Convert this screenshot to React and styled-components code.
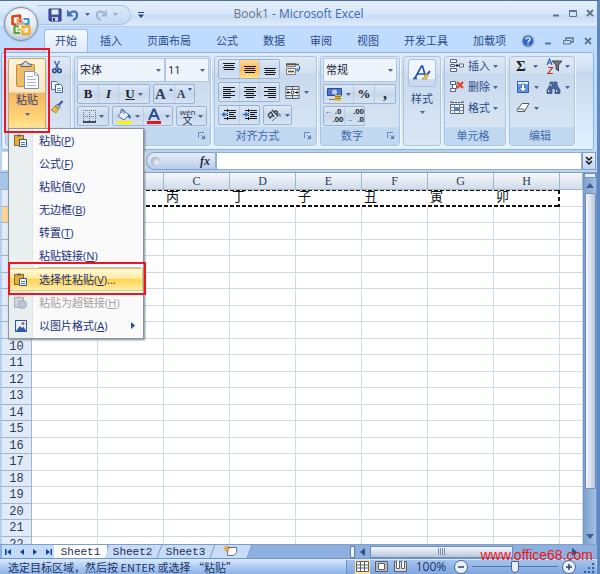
import React from "react";
import styled, { createGlobalStyle, css } from "styled-components";

const ui = `"Open Sans", "Noto Sans CJK SC", sans-serif`;
const sheetFont = `"Liberation Mono", "Noto Sans CJK SC", monospace`;
const navy = "#2b4b87";

const Global = createGlobalStyle`
  * { box-sizing: border-box; }
  body { margin: 0; font-family: ${ui}; font-size: 11px; line-height: 14px; color: ${navy}; }
  button, select, input { font: inherit; color: inherit; margin: 0; padding: 0; border: 0; background: none; border-radius: 0; }
  svg { display: block; flex: none; }
`;

const Window = styled.div`
  position: relative;
  height: 100vh;
  display: flex;
  flex-direction: column;
  overflow: hidden;
  background: #bfdbff;
  border-top: 1px solid #4f6f9d;
  border-right: 3px solid #5f88c2;
`;

/* ---------- title bar ---------- */
const TitleBar = styled.header`
  display: grid;
  grid-template-columns: 1fr auto 1fr;
  align-items: center;
  height: 26px;
  border-bottom: 1px solid #b4cdf0;
  background: linear-gradient(#e6f0fc, #d6e6f9 50%, #c9ddf6 60%, #deebfb);
`;
const Title = styled.h1`
  margin: 0;
  font: 12px/16px ${ui};
  color: #3d6aaa;
  span { color: #6b7482; }
`;
const QuickAccess = styled.div`
  display: flex;
  align-items: center;
  padding: 2px 0 0 37px;
`;
const QuickPill = styled.div`
  display: flex;
  align-items: center;
  gap: 4px;
  height: 20px;
  padding: 0 12px 0 11px;
  border: 1px solid #a8c3e6;
  border-left: 0;
  border-radius: 0 10px 10px 0;
  background: linear-gradient(#dbe9fa, #c6daf3);
  margin-right: 7px;
`;
const IconButton = styled.button`
  display: inline-flex;
  align-items: center;
  justify-content: center;
  gap: ${p => p.$gap || 0}px;
  width: ${p => (p.$w ? p.$w + "px" : "auto")};
  height: ${p => (p.$h ? p.$h + "px" : "auto")};
`;
const WindowControls = styled.div`
  display: flex;
  align-items: center;
  justify-content: flex-end;
  gap: 3px;
  padding-bottom: 2px;
`;
const OfficeButton = styled.button`
  position: absolute;
  left: 4px;
  top: 6px;
  z-index: 3;
  width: 34px;
  height: 34px;
  display: grid;
  place-items: center;
  border: 1px solid #7d8fa9;
  border-radius: 50%;
  background: radial-gradient(circle at 50% 30%, #ffffff, #e9edf3 50%, #bccadd 78%, #e9f1fb);
  box-shadow: 0 0 2px #7d93b2;
`;

/* ---------- tabs ---------- */
const TabBar = styled.nav`
  display: flex;
  align-items: stretch;
  gap: 1px;
  height: 25px;
  padding: 2px 2px 0 42px;
`;
const Tab = styled.button`
  padding: 0 12px;
  white-space: nowrap;
  color: #2b4b87;
  ${p => p.$active && css`
    margin: 0 -1px 0 2px;
    padding: 0 10px;
    border: 1px solid #9dbbe3;
    border-bottom: 0;
    border-radius: 3px 3px 0 0;
    background: linear-gradient(#f4f9fe, #dfeaf8);
  `}
`;
const TabTools = styled.div`
  display: flex;
  align-items: center;
  justify-content: flex-end;
  flex: 1;
  gap: 6px;
`;

/* ---------- ribbon ---------- */
const Ribbon = styled.section`
  position: relative;
  z-index: 2;
  display: flex;
  gap: 3px;
  height: 98px;
  margin: 0 3px 0 1px;
  padding: 3px 4px 3px 3px;
  border: 1px solid #8db2e3;
  border-radius: 3px;
  background: linear-gradient(#dfebf9, #d0dff1 18%, #c7d8ed 20%, #d9e9f9 70%, #e0f2fd);
`;
const Group = styled.div`
  position: relative;
  flex: 0 0 ${p => p.$w}px;
  display: flex;
  flex-direction: column;
  border: 1px solid #a9c4e4;
  border-radius: 3px;
  background: linear-gradient(#dfe9f5, #d2dff0 18%, #c9d9ed 20%, #dbe7f4);
  box-shadow: 1px 1px 0 #f2f8fe;
`;
const GroupBody = styled.div`
  flex: 1;
  display: flex;
  flex-direction: column;
  gap: ${p => p.$gap || 3}px;
  padding: ${p => p.$pad || "3px"};
`;
const GroupLabel = styled.div`
  display: flex;
  align-items: center;
  height: 18px;
  padding-right: 4px;
  background: #c1d8f1;
  color: #4468a8;
  span { flex: 1; text-align: center; padding-right: ${p => (p.$launcher ? 4 : 0)}px; }
`;
const Line = styled.div`
  display: flex;
  align-items: center;
  gap: ${p => (p.$gap === undefined ? 3 : p.$gap)}px;
`;
const Cluster = styled.div`
  display: flex;
  height: 20px;
  border: 1px solid #9ab3d5;
  border-radius: 2px;
  background: linear-gradient(#dde8f5, #c8d8ec 50%, #d6e3f3);
`;
const Tool = styled.button`
  width: ${p => p.$w || 20}px;
  display: flex;
  align-items: center;
  justify-content: center;
  gap: 3px;
  color: #222;
  background: ${p => (p.$on ? "linear-gradient(#fbdba0, #fdb95e 50%, #ffe48a)" : "none")};
  & + & { border-left: 1px solid #bccde3; }
`;
const Glyph = styled.span`
  font: ${p => (p.$italic ? "italic " : "")}bold ${p => p.$size || 13}px/16px "Liberation Serif", serif;
  text-decoration: ${p => (p.$under ? "underline" : "none")};
  color: ${p => p.$color || "#1c1f28"};
`;
const Pinyin = styled.span`
  display: flex;
  flex-direction: column;
  align-items: center;
  font-size: 10px;
  line-height: 10px;
  color: #26304a;
  small { font-size: 8px; line-height: 7px; }
`;
const Combo = styled.div`
  position: relative;
  flex: ${p => (p.$w ? `0 0 ${p.$w}px` : "1")};
  display: flex;
  align-items: center;
  height: 24px;
  border: 1px solid #b0c6e2;
  background: #eef4fc;
  select {
    appearance: none;
    flex: 1;
    min-width: 0;
    padding-left: 2px;
    color: #14213a;
  }
  svg { margin-right: 3px; pointer-events: none; }
`;
const CommandButton = styled.button`
  display: flex;
  align-items: center;
  gap: 3px;
  height: 18px;
  white-space: nowrap;
`;
const PasteButton = styled.button`
  display: flex;
  flex-direction: column;
  align-items: center;
  width: 38px;
  height: 73px;
  border: 1px solid #c9a767;
  border-radius: 2px;
  background: linear-gradient(#fdf3dc, #fbe8c3 33px, #e2bc78 34px, #f5b865 36px, #ffd678 60px, #ffe9a0);
  color: #3b3f6b;
  svg:first-child { margin: 1px 0; }
  span { margin: 1px 0 6px; }
`;
const ClipColumn = styled.div`
  display: flex;
  flex-direction: column;
  align-items: center;
  padding-bottom: 14px;
`;
const StyleTile = styled.span`
  display: grid;
  place-items: center;
  width: 28px;
  height: 28px;
  border: 1px solid #a9c2e2;
  border-radius: 3px;
  background: linear-gradient(#eff5fc 75%, #cbdaf0 75%);
`;
const StyleButton = styled.button`
  display: flex;
  flex-direction: column;
  align-items: center;
  gap: 5px;
`;
const Highlight = styled.div`
  position: absolute;
  inset: ${p => p.$inset};
  border: 2px solid #f01422;
  pointer-events: none;
  z-index: 5;
`;

/* ---------- paste menu ---------- */
const Menu = styled.div`
  position: absolute;
  z-index: 4;
  left: 2px;
  top: 71px;
  width: 136px;
  padding-bottom: 1px;
  border: 1px solid #8a939e;
  background: linear-gradient(90deg, #e9eeee 23px, #c5cdd0 23px, #fafafa 24px);
  box-shadow: 1px 1px 2px #7c8794;
`;
const MenuItem = styled.button`
  position: relative;
  display: grid;
  grid-template-columns: 23px 1fr auto;
  align-items: center;
  width: 100%;
  height: 23px;
  padding-right: 8px;
  text-align: left;
  color: ${p => (p.disabled ? "#a2a2a2" : "#20307a")};
  white-space: nowrap;
  svg { justify-self: center; }
  ${p => p.$hot && css`
    background: linear-gradient(#fffbe2, #ffe9a0 45%, #ffd64f 50%, #ffe388 80%, #fff3b8);
    box-shadow: inset 0 0 0 1px #e3c768;
  `}
`;
const MenuText = styled.span`
  padding-left: 7px;
  u { text-underline-offset: 1px; }
`;
const MenuRule = styled.hr`
  height: 1px;
  margin: 0 2px 0 29px;
  border: 0;
  background: #b9bec4;
`;

/* ---------- formula bar ---------- */
const FormulaBar = styled.div`
  display: flex;
  height: 23px;
  padding: 2px 1px 2px 2px;
  border-bottom: 1px solid #7f9fca;
  background: #bcd3ee;
`;
const NameBox = styled.input`
  width: 144px;
  background: #fff;
`;
const FxPill = styled.div`
  display: flex;
  align-items: center;
  justify-content: space-between;
  width: 70px;
  padding: 0 5px 0 4px;
  border: 1px solid #7f9fca;
  border-right-color: #8daed8;
  border-radius: 9px 0 0 9px;
  background: linear-gradient(#e5eefa, #b8cdea);
`;
const Knob = styled.span`
  width: 9px;
  height: 9px;
  border-radius: 50%;
  background: radial-gradient(circle at 65% 60%, #f7f9fb, #8796ab);
`;
const FormulaInput = styled.input`
  flex: 1;
  min-width: 0;
  border: 1px solid #8daed8;
  background: #fff;
`;
const ExpandButton = styled.button`
  width: 14px;
  display: grid;
  place-items: center;
  border: 1px solid #7f9fca;
  background: linear-gradient(#eaf2fc, #c3d6ef);
`;

/* ---------- sheet ---------- */
const Workspace = styled.main`
  flex: 1;
  min-height: 0;
  display: flex;
  background: #fff;
`;
const SheetView = styled.div`
  flex: 1;
  min-width: 0;
  overflow: hidden;
`;
const Grid = styled.table`
  width: 100%;
  table-layout: fixed;
  border-spacing: 0;
  font: 13px/14px ${sheetFont};
  color: #111;
  tbody tr { height: 17px; }
  tbody tr:nth-child(even) { height: 16px; }
  td, th { padding: 0; overflow: hidden; white-space: nowrap; }
  td { border: solid #d2d8e6; border-width: 0 1px 1px 0; line-height: 14px; }
`;
const ColumnHead = styled.th`
  width: ${p => (p.$w ? p.$w + "px" : "auto")};
  height: 17px;
  font-family: "Liberation Serif", serif;
  font-weight: normal;
  font-size: 12px;
  color: #2e3c50;
  border: solid #9eb6ce;
  border-width: 0 1px 1px 0;
  background: ${p => (p.$corner ? "#a9c4e9" : "linear-gradient(#f6f8fb, #d3dce9)")};
`;
const RowHead = styled.th`
  font-weight: normal;
  font-size: 12px;
  color: #2e3c50;
  border: solid #9eb6ce;
  border-width: 0 1px 1px 2px;
  border-left-color: #b7d0f0;
  background: ${p => (p.$current ? "#ffd58d" : "#e1eaf7")};
`;
const dash = "repeating-linear-gradient(90deg, #111 0 4px, #fff 4px 6px)";
const MarqueeCell = styled.td`
  background: ${p => (p.$last
    ? `repeating-linear-gradient(#111 0 4px, #fff 4px 7px) right / 2px 100% no-repeat,`
    : "")} ${dash} top / 100% 1px no-repeat, ${dash} bottom / 100% 2px no-repeat;
  background-origin: border-box;
  && { border-color: transparent; padding-left: 2px; }
`;
const VScroll = styled.div`
  width: 14px;
  display: flex;
  flex-direction: column;
  align-items: center;
  border: solid #7297cb;
  border-width: 0 1px;
  background: linear-gradient(90deg, #7fa0cd, #a3c0e5);
`;
const SplitHandle = styled.div`
  width: 12px;
  height: 5px;
  border: 1px solid #6f93c6;
  background: #e9f1fb;
`;
const VThumb = styled.div`
  flex: 1;
  width: 11px;
  margin-bottom: 40px;
  border: 1px solid #6e8db9;
  border-radius: 1px;
  background: linear-gradient(90deg, #f4f7fc, #dde4ef 45%, #b7c4da);
`;

/* ---------- sheet tabs ---------- */
const BottomBar = styled.div`
  display: flex;
  height: 14px;
  padding-left: 2px;
  border-top: 1px solid #7f9fca;
  background: #8db0df;
`;
const NavButtons = styled.div`
  display: flex;
  width: 52px;
  background: #c3dbf8;
`;
const SheetTab = styled.button`
  position: relative;
  width: ${p => p.$w || 53}px;
  font: 11px/12px ${sheetFont};
  color: #1f2e4d;
  background: ${p => (p.$active ? "#fff" : "#c7dcf6")};
  border-right: 1px solid #6e94c8;
  transform: skewX(-20deg);
  ${p => p.$active && css`transform: none; border-right: 0;`}
  & > * { display: inline-block; transform: ${p => (p.$active ? "none" : "skewX(20deg)")}; }
`;
const HScroll = styled.div`
  flex: 1;
  display: flex;
  align-items: center;
  margin-left: 100px;
`;
const HSplit = styled.div`
  width: 5px;
  height: 12px;
  border: 1px solid #5f83b7;
  background: #eef5fd;
`;
const HThumb = styled.div`
  flex: 0 1 143px;
  height: 12px;
  display: grid;
  place-items: center;
  border: 1px solid #6e8db9;
  background: linear-gradient(#f4f7fc, #dbe3f0 45%, #b5c4db);
`;
const HTrack = styled.div`
  flex: 1;
  display: flex;
  justify-content: flex-end;
  padding-right: 20px;
`;

/* ---------- status ---------- */
const StatusBar = styled.footer`
  display: flex;
  align-items: center;
  height: 16px;
  padding: 0 1px 0 8px;
  border-top: 1px solid #6f94c9;
  background: linear-gradient(#dceafb, #b3d0f4 45%, #8fb3e6);
  color: #1c3468;
`;
const StatusText = styled.div`
  flex: 1;
  white-space: nowrap;
  font-family: "Noto Sans CJK SC", sans-serif;
`;
const StatusTools = styled.div`
  display: flex;
  align-items: center;
  gap: 4px;
  padding-left: 8px;
  border-left: 1px solid #6b90c7;
  background: linear-gradient(#a5c4ee, #7fa6dd);
`;
const ViewButton = styled.button`
  display: grid;
  place-items: center;
  width: 15px;
  height: 14px;
  background: ${p => (p.$on ? "#ffe29a" : "none")};
`;
const ZoomText = styled.span`
  width: 38px;
  font-size: 12px;
  text-align: center;
`;
const RoundButton = styled.button`
  width: 14px;
  height: 14px;
  display: grid;
  place-items: center;
  border: 1px solid #46648f;
  border-radius: 50%;
  background: #e9f0fa;
`;
const ZoomSlider = styled.input`
  appearance: none;
  width: 86px;
  height: 12px;
  background: linear-gradient(#4f76ae, #4f76ae) center / 100% 1px no-repeat;
  &::-webkit-slider-thumb {
    appearance: none;
    width: 8px;
    height: 12px;
    border: 1px solid #46648f;
    border-radius: 1px 1px 4px 4px;
    background: #e9f0fa;
  }
`;
const Watermark = styled.div`
  position: absolute;
  right: 4px;
  bottom: 11px;
  font: 14px/16px "Liberation Sans", sans-serif;
  color: #f01414;
`;

/* ---------- icons ---------- */
const Icon = ({ w = 16, h = w, vb, children }) => (
  <svg width={w} height={h} viewBox={vb || `0 0 ${w} ${h}`} fill="none" aria-hidden="true">{children}</svg>
);
const Caret = ({ color = "#4a6596" }) => <Icon w={5} h={3}><path d="M0 0h5L2.5 3z" fill={color} /></Icon>;
const Lines = ({ widths, y = 3, align = "left", step = 2 }) => (
  <Icon w={14}>
    {widths.map((n, i) => (
      <rect key={i} x={align === "left" ? 1 : align === "right" ? 13 - n : 7 - n / 2} y={y + i * step} width={n} height="1" fill="#15181d" />
    ))}
  </Icon>
);
const OfficeLogo = () => (
  <Icon w={24} vb="0 0 24 24">
    <path d="M11 10.500V3.500L3.500 4.500v7.500l4 1" stroke="#d8451f" strokeWidth="2.600" strokeLinejoin="round" />
    <path d="M8.500 7.500h4v4.500h-4z" stroke="#ee8a4a" strokeWidth="1.500" />
    <path d="M14.500 7h5v5h-4" stroke="#3b93cf" strokeWidth="2.200" strokeLinejoin="round" />
    <path d="M12.500 9.500h3v3h-3z" fill="#7fbbe3" />
    <path d="M10 14.500H5.500V21H11" stroke="#5ba238" strokeWidth="2.200" strokeLinejoin="round" />
    <path d="M8.500 16.500h3v2.500h-3z" fill="#a5cf68" />
    <path d="M13.500 14.500h7V22h-7z" stroke="#f2ab27" strokeWidth="2.400" strokeLinejoin="round" />
    <path d="M13 16h3.500v3H13z" fill="#fbd56b" />
  </Icon>
);
const SaveIcon = () => (
  <Icon w={14}>
    <path d="M1 1h12v12H2l-1-1z" fill="#4551a8" stroke="#2a3280" />
    <path d="M3.500 1.500h7v5h-7z" fill="#e8eefb" /><path d="M4 9h6v4H4z" fill="#c9cfe4" /><path d="M5 10h2v3H5z" fill="#2a3280" />
  </Icon>
);
const UndoIcon = ({ color = "#3d6fc0", flip }) => (
  <Icon w={14}>
    <g transform={flip ? "translate(14 0) scale(-1 1)" : undefined}>
      <path d="M3 6c4-4 8-3 8 1 0 2-1 4-4 5" stroke={color} strokeWidth="2.200" />
      <path d="M1 1.500v7h6.500z" fill={color} />
    </g>
  </Icon>
);
const MinIcon = () => <Icon w={14}><path d="M4 9.500h6" stroke="#60738f" strokeWidth="2" /></Icon>;
const MaxIcon = () => <Icon w={14}><path d="M3.500 4.500h7v6h-7z" stroke="#60738f" /><path d="M3 5h8" stroke="#60738f" strokeWidth="2" /></Icon>;
const RestoreIcon = () => <Icon w={14}><path d="M5 6V4h7v4h-2" stroke="#60738f" strokeWidth="1.500" /><path d="M2.500 6.500h7V10h-7z" stroke="#60738f" /></Icon>;
const CloseIcon = () => <Icon w={14}><path d="M4 4l6 6M10 4l-6 6" stroke="#60738f" strokeWidth="1.800" /></Icon>;
const HelpIcon = () => (
  <Icon w={14}>
    <circle cx="7" cy="7" r="6" fill="#2c65c9" stroke="#9db4d4" strokeWidth="1.500" />
    <path d="M5 5.500c0-2.500 4-2.500 4-.2C9 7 7 6.800 7 8.500M7 9.700v1.300" stroke="#fff" strokeWidth="1.400" />
  </Icon>
);
const ClipboardBig = () => (
  <Icon w={28} h={31}>
    <rect x="3.500" y="4.500" width="18" height="22" rx="1" fill="#efbd67" stroke="#bd8d3d" />
    <path d="M8 6.500V4h2.500c0-3.500 4.500-3.500 4.500 0H18v2.500z" fill="#d6dade" stroke="#555d67" />
    <path d="M11.500 11.500h10l4 4v13h-14z" fill="#fbfcff" stroke="#8190ae" />
    <path d="M21.500 11.500v4h4M14 16.500h6M14 19.500h9M14 22.500h9M14 25.500h9" stroke="#a9b5cf" />
  </Icon>
);
const CutIcon = () => (
  <Icon w={14}>
    <path d="M4.500 1l4 8M9.500 1l-4 8" stroke="#4466a5" strokeWidth="1.500" />
    <circle cx="4.500" cy="10.800" r="1.800" stroke="#24498f" strokeWidth="1.500" /><circle cx="9.500" cy="10.800" r="1.800" stroke="#24498f" strokeWidth="1.500" />
  </Icon>
);
const CopyIcon = () => (
  <Icon w={14}>
    <path d="M1.500 1.500h5l2 2v6h-7z" fill="#eef3fc" stroke="#5275b2" />
    <path d="M5.500 4.500h5l2 2v6h-7z" fill="#fff" stroke="#3e62a4" /><path d="M7 8.500h4M7 10.500h4" stroke="#6c8cc4" />
  </Icon>
);
const BrushIcon = () => (
  <Icon w={14}><path d="M12.500 1L8 6" stroke="#4d5f8c" strokeWidth="2.500" /><path d="M7 4l3.500 3-2 2-3.500-3z" fill="#a8afc4" stroke="#60678a" strokeWidth=".7" /><path d="M5 6l3.500 3L6 13 1 10z" fill="#e6bc3a" stroke="#8d7324" strokeWidth=".7" /></Icon>
);
const PasteSmall = ({ grey }) => (
  <Icon w={15}>
    <rect x="1.500" y="2.500" width="9" height="10" fill={grey ? "#cfd4dc" : "#e7ae35"} stroke={grey ? "#a9afba" : "#8c6a25"} />
    <path d="M4 3.500v-2h4v2z" fill={grey ? "#b9bfc9" : "#5f6875"} />
    {grey ? <circle cx="9.500" cy="9.500" r="4" fill="#bcc5d3" stroke="#a0aabc" />
      : <><path d="M6.500 6.500h7v7h-7z" fill="#f4f8ff" stroke="#39547d" /><path d="M8 9.500h4M8 11.500h4" stroke="#4f73aa" /></>}
  </Icon>
);
const PictureIcon = () => (
  <Icon w={14}><path d="M1.500 1.500h11v11h-11z" fill="#e4efff" stroke="#2f549b" /><path d="M2 12l4-5 2 2 1.500-1.500L12 12z" fill="#315bb0" /><circle cx="9" cy="4.500" r="1.500" fill="#c0622d" /></Icon>
);
const BorderIcon = () => (
  <Icon w={14}><path d="M1.500 1v12M7.500 1v12M13.500 1v12M1 1.500h12M1 7.500h12" stroke="#6a7180" strokeDasharray="1 1" /><path d="M1 13h13" stroke="#15181d" strokeWidth="1.500" /></Icon>
);
const FillIcon = () => (
  <Icon w={16} h={17}>
    <path d="M7 2l6 5-5 5-6-4z" fill="#e7eefa" stroke="#536b97" /><path d="M5 5V2c0-2 3-1 3 1v3" stroke="#536b97" /><path d="M12 6c3 1 3 3 2.500 5L12 9z" fill="#2a66bd" /><path d="M1 13h15v3H1z" fill="#fff200" />
  </Icon>
);
const FontColor = () => (
  <Icon w={16} h={17}><path d="M3 12L7.500 1.500h1L13 12M5 8h6" stroke="#2d4e92" strokeWidth="2" /><path d="M1 13h14v3H1z" fill="#e8141c" /></Icon>
);
const LauncherIcon = () => <Icon w={8}><path d="M.5 6V.5H6M3 3l3 3" stroke="#6d87b2" /><path d="M7 3v4H3z" fill="#5b78a8" /></Icon>;
const WrapIcon = () => (
  <Icon w={16}><path d="M1.500 2.500h9v3h-9zM1.500 7.500h9v6h-9z" fill="#f5efe2" stroke="#7a7d86" /><path d="M1 3.500h13M3 10.500h6" stroke="#5d5148" strokeWidth="1.500" /><path d="M14.500 5v4H12M13.500 7L11.500 9l2 2" stroke="#2d5db1" /></Icon>
);
const MergeIcon = () => (
  <Icon w={15}><path d="M1 1.500h13v12H1z" fill="#d9e1ee" stroke="#59606e" /><path d="M1 4.500h13M1 10.500h13M7.500 1v3M7.500 11v3" stroke="#59606e" /><path d="M1.500 5h12v5h-12z" fill="#fff" /><path d="M2 7.500h3M10 7.500h3M3.500 6L2 7.500 3.500 9M11.500 6L13 7.500 11.500 9" stroke="#15181d" /><circle cx="7.500" cy="7.500" r="1.500" stroke="#15181d" /></Icon>
);
const IndentIcon = ({ right }) => (
  <Icon w={16}>
    <path d="M3 3.500h12M8 5.500h7M8 7.500h5M8 9.500h7M3 11.500h12" stroke="#15181d" /><path d="M6.500 2v12" stroke="#15181d" strokeDasharray="1 1" />
    <path d={right ? "M1 7.500h4M3.500 5.500l2 2-2 2" : "M2 7.500h4M3.500 5.500l-2 2 2 2"} stroke="#2d66c4" strokeWidth="1.300" />
  </Icon>
);
const RotateIcon = () => (
  <Icon w={16}><path d="M2 8l3-3 3 5M2 8l2 3 3-3M6 3l6 6M8 5c3-3 5 1 2 3" stroke="#333842" strokeWidth="1.200" /><path d="M6 14l8-7M14 10V7h-3" stroke="#66758e" /></Icon>
);
const MoneyIcon = () => (
  <Icon w={17}><path d="M1.500 2.500h14v7h-14z" fill="#4c75c7" stroke="#264b99" /><circle cx="8.500" cy="6" r="2.500" fill="#bfd1f4" /><path d="M9 9h6v6H9z" fill="#e9b93b" /><path d="M9 10.500h6M9 12.500h6M3 13.500h6" stroke="#a4791b" /></Icon>
);
const DecimalText = styled.span`
  display: grid;
  grid-template-columns: auto auto;
  font: bold 8px/8px "Liberation Sans", sans-serif;
  color: #222;
  i { font-style: normal; color: #2d5db1; }
  b:last-child { text-align: right; }
`;
const InsertIcon = () => (
  <Icon w={16}><path d="M1.500 1.500h6v3h-6zM1.500 10.500h6v3h-6zM1.500 6.500h4v2h-4zM10.500 6h4v3h-4z" fill="#fff" stroke="#56647f" /><path d="M7 7.500h3M8.500 6L7 7.500 8.500 9" stroke="#15181d" /></Icon>
);
const DeleteIcon = () => (
  <Icon w={16}><path d="M1.500 2.500h5v3h-5zM1.500 9.500h5v3h-5zM3.500 5.500h4v4h-4z" fill="#fff" stroke="#56647f" /><path d="M8 3l6 6M14 3L8 9" stroke="#e0451f" strokeWidth="2.200" /></Icon>
);
const FormatIcon = () => (
  <Icon w={16}><path d="M1.500 4.500h13v9h-13z" fill="#f6f8fc" stroke="#56647f" /><path d="M1 7.500h13M1 10.500h13M5.500 4v10M10.500 4v10" stroke="#76839b" /><path d="M6 8h4v3H6z" fill="#4d7dcb" /><path d="M2 1v3M14 1v3M3 2.500h10" stroke="#333d50" strokeDasharray="2 1" /></Icon>
);
const SortIcon = () => (
  <Icon w={17}><path d="M1 7l2.500-6L6 7M2 5h3" stroke="#3462ab" strokeWidth="1.200" /><path d="M2 9.500h4.500L2 15.500h5" stroke="#c03028" strokeWidth="1.200" /><path d="M6 3h10l-3.500 4v6l-2.500-2V7z" fill="#737a85" stroke="#3f4650" /></Icon>
);
const FillDownIcon = () => (
  <Icon w={14}><path d="M1.500 1.500h11v11h-11z" fill="#6297e8" stroke="#315fae" /><path d="M2 2h10v2H2z" fill="#e7f0fe" /><path d="M5.500 4h3v4h2.500l-4 4-4-4h2.500z" fill="#fff" stroke="#2554a8" strokeWidth=".7" /></Icon>
);
const FindIcon = () => (
  <Icon w={15}><path d="M4 2h3v4h1V2h3v3l3 5v3.500H9V8.500H6v5H1V10l3-5z" fill="#49689f" stroke="#2b477c" strokeWidth=".7" /><path d="M2.500 10v2M10.500 10v2M5 4v2" stroke="#d8e4f6" /></Icon>
);
const EraserIcon = () => <Icon w={14}><path d="M6 2.500h7L8.500 10.500h-7c-1-.5-.5-1.500 0-2z" fill="#fff" stroke="#4d5b73" /><path d="M1.500 8h6l1 2.500" stroke="#4d5b73" /></Icon>;
const StyleIcon = () => <Icon w={20}><path d="M3 15L9.500 3h1L14 15M6 11h6M1 15.500h4M10 15.500h5" stroke="#28529f" strokeWidth="1.700" /><path d="M18 8l-5 6" stroke="#44628f" strokeWidth="2" /><path d="M14 11l3 2-2 3h-5z" fill="#e4bd3b" /></Icon>;
const FxGlyph = styled.em`
  font: italic bold 12px/14px "Liberation Serif", serif;
  color: #26304a;
`;
const NavIcon = ({ d }) => <Icon w={8}><path d={d} fill="#17438c" /></Icon>;
const NewSheetIcon = () => <Icon w={16} h={12}><path d="M4.500 2.500h9v5l-3 3h-6z" fill="#fff" stroke="#5f7295" /><path d="M3.500 0v7M0 3.500h7M1 1l5 5M6 1L1 6" stroke="#f09a2b" /></Icon>;
const NormalView = () => <Icon w={13} h={11}><path d="M.5.5h12v10H.5zM.5 4h12M.5 7h12M4.500 0v11M8.500 0v11" fill="#fff" stroke="#5a6068" /></Icon>;
const LayoutView = () => <Icon w={13} h={11}><path d="M.5.5h12v10H.5z" fill="#b8bec8" stroke="#5a6068" /><path d="M3.500 2.500h6v6h-6z" fill="#fff" stroke="#5a6068" /></Icon>;
const BreakView = () => <Icon w={13} h={11}><path d="M.5.5h12v10H.5z" fill="#d8dde5" stroke="#5a6068" /><path d="M2.500 0v7.500h3V0M7.500 0v7.500h3V0" fill="#fff" stroke="#5a6068" /></Icon>;

/* ---------- data ---------- */
const tabs = ["开始", "插入", "页面布局", "公式", "数据", "审阅", "视图", "开发工具", "加载项"];
const menuItems = [
  { text: "粘贴", key: "P", icon: <PasteSmall /> },
  { text: "公式", key: "F" },
  { text: "粘贴值", key: "V" },
  { text: "无边框", key: "B" },
  { text: "转置", key: "T" },
  { text: "粘贴链接", key: "N" },
  { rule: true },
  { text: "选择性粘贴", key: "V", tail: "...", icon: <PasteSmall />, hot: true },
  { text: "粘贴为超链接", key: "H", icon: <PasteSmall grey />, disabled: true },
  { text: "以图片格式", key: "A", icon: <PictureIcon />, sub: true },
];
const columns = ["A", "B", "C", "D", "E", "F", "G", "H"];
const firstRow = ["", "", "丙", "丁", "子", "丑", "寅", "卯"];
const rows = Array.from({ length: 22 }, (_, i) => i + 1);

const Select = ({ label, value, w }) => (
  <Combo $w={w}>
    <select aria-label={label} defaultValue={value}><option>{value}</option></select>
    <Caret />
  </Combo>
);
const Label = ({ children, launcher }) => (
  <GroupLabel $launcher={launcher}><span>{children}</span>{launcher && <LauncherIcon />}</GroupLabel>
);

function PasteMenu() {
  return (
    <Menu role="menu">
      {menuItems.map((m, i) => m.rule ? <MenuRule key={i} /> : (
        <MenuItem key={i} role="menuitem" $hot={m.hot} disabled={m.disabled}>
          {m.icon || <span />}
          <MenuText>{m.text}(<u>{m.key}</u>){m.tail}</MenuText>
          {m.sub && <Icon w={4} h={7}><path d="M0 0v7l4-3.500z" fill="#2b4b87" /></Icon>}
          {m.hot && <Highlight $inset="-6px -3px -4px -1px" />}
        </MenuItem>
      ))}
    </Menu>
  );
}

function RibbonGroups() {
  return (
    <Ribbon>
      <Group $w={66}>
        <GroupBody $pad="0 2px">
          <Line $gap={4}>
            <PasteButton><ClipboardBig /><span>粘贴</span><Caret /></PasteButton>
            <ClipColumn>
              <IconButton aria-label="剪切" $h={20}><CutIcon /></IconButton>
              <IconButton aria-label="复制" $h={20}><CopyIcon /></IconButton>
              <IconButton aria-label="格式刷" $h={20}><BrushIcon /></IconButton>
            </ClipColumn>
          </Line>
        </GroupBody>
        <Label />
        <PasteMenu />
        <Highlight $inset="-9px 20px 12px -2px" />
      </Group>

      <Group $w={137}>
        <GroupBody $pad="1px 1px 0 2px" $gap={2}>
          <Line $gap={0}><Select label="字体" value="宋体" w={88} /><Select label="字号" value="11" /></Line>
          <Line>
            <Cluster>
              <Tool $w={20}><Glyph>B</Glyph></Tool>
              <Tool $w={20}><Glyph $italic>I</Glyph></Tool>
              <Tool $w={31}><Glyph $under>U</Glyph><Caret /></Tool>
            </Cluster>
            <Cluster>
              <Tool $w={20}><Glyph $size={15} $color="#35425c">A</Glyph><Icon w={4} h={12}><path d="M0 3h4L2 0z" fill="#2d5db1" /></Icon></Tool>
              <Tool $w={20}><Glyph $size={12} $color="#35425c">A</Glyph><Icon w={4} h={12}><path d="M0 0h4L2 3z" fill="#2d5db1" /></Icon></Tool>
            </Cluster>
          </Line>
          <Line>
            <Cluster><Tool $w={30} aria-label="边框"><BorderIcon /><Caret /></Tool></Cluster>
            <Cluster>
              <Tool $w={30} aria-label="填充颜色"><FillIcon /><Caret /></Tool>
              <Tool $w={29} aria-label="字体颜色"><FontColor /><Caret /></Tool>
            </Cluster>
            <Cluster><Tool $w={29}><Pinyin><small>wén</small>文</Pinyin><Caret /></Tool></Cluster>
          </Line>
        </GroupBody>
        <Label launcher />
      </Group>

      <Group $w={103}>
        <GroupBody $pad="2px 3px 0">
          <Line $gap={5}>
            <Cluster>
              <Tool aria-label="顶端对齐"><Lines widths={[12, 10, 12, 10]} y={1} align="center" /></Tool>
              <Tool $on aria-label="垂直居中"><Lines widths={[12, 10, 12, 10]} y={4} align="center" /></Tool>
              <Tool aria-label="底端对齐"><Lines widths={[12, 10, 12, 10]} y={6} align="center" /></Tool>
            </Cluster>
            <IconButton aria-label="自动换行"><WrapIcon /></IconButton>
          </Line>
          <Line $gap={5}>
            <Cluster>
              <Tool aria-label="左对齐"><Lines widths={[12, 8, 12, 8, 12, 8]} y={2} /></Tool>
              <Tool aria-label="居中"><Lines widths={[12, 8, 12, 8, 12, 8]} y={2} align="center" /></Tool>
              <Tool aria-label="右对齐"><Lines widths={[12, 8, 12, 8, 12, 8]} y={2} align="right" /></Tool>
            </Cluster>
            <IconButton $gap={4} aria-label="合并后居中"><MergeIcon /><Caret /></IconButton>
          </Line>
          <Line>
            <Cluster>
              <Tool aria-label="减少缩进"><IndentIcon /></Tool>
              <Tool aria-label="增加缩进"><IndentIcon right /></Tool>
            </Cluster>
            <Cluster><Tool $w={27} aria-label="方向"><RotateIcon /><Caret /></Tool></Cluster>
          </Line>
        </GroupBody>
        <Label launcher>对齐方式</Label>
      </Group>

      <Group $w={80}>
        <GroupBody $pad="1px 2px 0" $gap={2}>
          <Line><Select label="数字格式" value="常规" /></Line>
          <Line>
            <Cluster>
              <Tool $w={29} aria-label="会计数字格式"><MoneyIcon /><Caret /></Tool>
              <Tool $w={21}><Glyph $size={13}>%</Glyph></Tool>
              <Tool $w={21}><Glyph $size={16}>,</Glyph></Tool>
            </Cluster>
          </Line>
          <Line>
            <Cluster>
              <Tool aria-label="增加小数位数"><DecimalText><i>←</i><b>.0</b><b /><b>.00</b></DecimalText></Tool>
              <Tool aria-label="减少小数位数"><DecimalText><b /><b>.00</b><i>→</i><b>.0</b></DecimalText></Tool>
            </Cluster>
          </Line>
        </GroupBody>
        <Label launcher>数字</Label>
      </Group>

      <Group $w={38}>
        <GroupBody $pad="2px 4px"><StyleButton><StyleTile><StyleIcon /></StyleTile><span>样式</span><Caret /></StyleButton></GroupBody>
      </Group>

      <Group $w={62}>
        <GroupBody $pad="0 4px">
          <CommandButton><InsertIcon />插入<Caret /></CommandButton>
          <CommandButton><DeleteIcon />删除<Caret /></CommandButton>
          <CommandButton><FormatIcon />格式<Caret /></CommandButton>
        </GroupBody>
        <Label>单元格</Label>
      </Group>

      <Group $w={64}>
        <GroupBody $pad="0 4px">
          <Line $gap={6}>
            <IconButton $w={26} $h={18} $gap={7} aria-label="求和"><Glyph $size={15}>Σ</Glyph><Caret /></IconButton>
            <IconButton $gap={2} aria-label="排序和筛选"><SortIcon /><Caret /></IconButton>
          </Line>
          <Line $gap={6}>
            <IconButton $w={26} $h={18} $gap={4} aria-label="填充"><FillDownIcon /><Caret /></IconButton>
            <IconButton $gap={4} aria-label="查找和选择"><FindIcon /><Caret /></IconButton>
          </Line>
          <Line><IconButton $w={26} $h={18} $gap={4} aria-label="清除"><EraserIcon /><Caret /></IconButton></Line>
        </GroupBody>
        <Label>编辑</Label>
      </Group>
    </Ribbon>
  );
}

export default function App() {
  return (
    <Window>
      <Global />
      <OfficeButton aria-label="Office 按钮"><OfficeLogo /></OfficeButton>
      <TitleBar>
        <QuickAccess>
          <QuickPill>
            <IconButton aria-label="保存"><SaveIcon /></IconButton>
            <IconButton $gap={5} aria-label="撤消"><UndoIcon /><Caret /></IconButton>
            <IconButton $gap={5} aria-label="恢复"><UndoIcon color="#a4b6d0" flip /><Caret color="#98a9c4" /></IconButton>
          </QuickPill>
          <IconButton aria-label="自定义快速访问工具栏"><Icon w={6}><path d="M0 .5h6" stroke="#26437a" /><path d="M0 2.500h6L3 6z" fill="#26437a" /></Icon></IconButton>
        </QuickAccess>
        <Title><span>Book1</span> - Microsoft Excel</Title>
        <WindowControls>
          <IconButton aria-label="最小化"><MinIcon /></IconButton>
          <IconButton aria-label="最大化"><MaxIcon /></IconButton>
          <IconButton aria-label="关闭"><CloseIcon /></IconButton>
        </WindowControls>
      </TitleBar>
      <TabBar>
        {tabs.map((t, i) => <Tab key={t} $active={i === 0}>{t}</Tab>)}
        <TabTools>
          <IconButton aria-label="帮助"><HelpIcon /></IconButton>
          <IconButton aria-label="最小化工作簿"><MinIcon /></IconButton>
          <IconButton aria-label="还原工作簿"><RestoreIcon /></IconButton>
          <IconButton aria-label="关闭工作簿"><CloseIcon /></IconButton>
        </TabTools>
      </TabBar>
      <RibbonGroups />
      <FormulaBar>
        <NameBox aria-label="名称框" />
        <FxPill><Knob /><FxGlyph>fx</FxGlyph></FxPill>
        <FormulaInput aria-label="编辑栏" />
        <ExpandButton aria-label="展开编辑栏"><Icon w={8} h={10}><path d="M1 1l3 3 3-3M1 5l3 3 3-3" stroke="#111" strokeWidth="1.500" /></Icon></ExpandButton>
      </FormulaBar>
      <Workspace>
        <SheetView>
          <Grid>
            <thead>
              <tr>
                <ColumnHead $w={32} $corner />
                {columns.map((c, i) => <ColumnHead key={c} $w={66}>{i > 1 && c}</ColumnHead>)}
                <ColumnHead />
              </tr>
            </thead>
            <tbody>
              {rows.map(r => (
                <tr key={r}>
                  <RowHead $current={r === 2}>{r > 9 && r}</RowHead>
                  {columns.map((c, i) => r === 1
                    ? <MarqueeCell key={c} $last={i === 7}>{firstRow[i]}</MarqueeCell>
                    : <td key={c} />)}
                  <td />
                </tr>
              ))}
            </tbody>
          </Grid>
        </SheetView>
        <VScroll>
          <SplitHandle />
          <IconButton $w={12} $h={15} aria-label="向上滚动"><Icon w={8} h={5}><path d="M0 5h8L4 0z" fill="#3d5f93" /></Icon></IconButton>
          <VThumb />
          <IconButton $w={12} $h={15} aria-label="向下滚动"><Icon w={8} h={5}><path d="M0 0h8L4 5z" fill="#3d5f93" /></Icon></IconButton>
        </VScroll>
      </Workspace>
      <BottomBar>
        <NavButtons>
          <IconButton $w={13} aria-label="第一张"><NavIcon d="M0 1h1.500v6H0zM6 1v6L2 4z" /></IconButton>
          <IconButton $w={13} aria-label="上一张"><NavIcon d="M6 1v6L2 4z" /></IconButton>
          <IconButton $w={13} aria-label="下一张"><NavIcon d="M2 1v6l4-3z" /></IconButton>
          <IconButton $w={13} aria-label="最后一张"><NavIcon d="M2 1v6l4-3zM6.500 1H8v6H6.500z" /></IconButton>
        </NavButtons>
        <SheetTab $active><span>Sheet1</span></SheetTab>
        <SheetTab><span>Sheet2</span></SheetTab>
        <SheetTab><span>Sheet3</span></SheetTab>
        <SheetTab $w={37} aria-label="插入工作表"><NewSheetIcon /></SheetTab>
        <HScroll>
          <HSplit />
          <IconButton $w={15} aria-label="向左滚动"><Icon w={5} h={8}><path d="M5 0v8L0 4z" fill="#2d5085" /></Icon></IconButton>
          <HThumb><Icon w={8} h={7}><path d="M.5 0v7M2.500 0v7M4.500 0v7M6.500 0v7" stroke="#7c8fae" /></Icon></HThumb>
          <HTrack><IconButton aria-label="向右滚动"><Icon w={5} h={8}><path d="M0 0v8l5-4z" fill="#2d5085" /></Icon></IconButton></HTrack>
        </HScroll>
      </BottomBar>
      <StatusBar>
        <StatusText>选定目标区域，然后按 ENTER 或选择 “粘贴”</StatusText>
        <StatusTools>
          <ViewButton $on aria-label="普通"><NormalView /></ViewButton>
          <ViewButton aria-label="页面布局"><LayoutView /></ViewButton>
          <ViewButton aria-label="分页预览"><BreakView /></ViewButton>
          <ZoomText>100%</ZoomText>
          <RoundButton aria-label="缩小"><Icon w={8}><path d="M1 4h6" stroke="#26437a" strokeWidth="1.500" /></Icon></RoundButton>
          <ZoomSlider type="range" min="10" max="190" defaultValue="100" aria-label="缩放" />
          <RoundButton aria-label="放大"><Icon w={8}><path d="M1 4h6M4 1v6" stroke="#26437a" strokeWidth="1.500" /></Icon></RoundButton>
          <Icon w={16} h={14}><path d="M12 3h2v2h-2zM8 7h2v2H8zM12 7h2v2h-2zM4 11h2v2H4zM8 11h2v2H8zM12 11h2v2h-2z" fill="#355f9f" /></Icon>
        </StatusTools>
      </StatusBar>
      <Watermark>www.office68.com</Watermark>
    </Window>
  );
}
